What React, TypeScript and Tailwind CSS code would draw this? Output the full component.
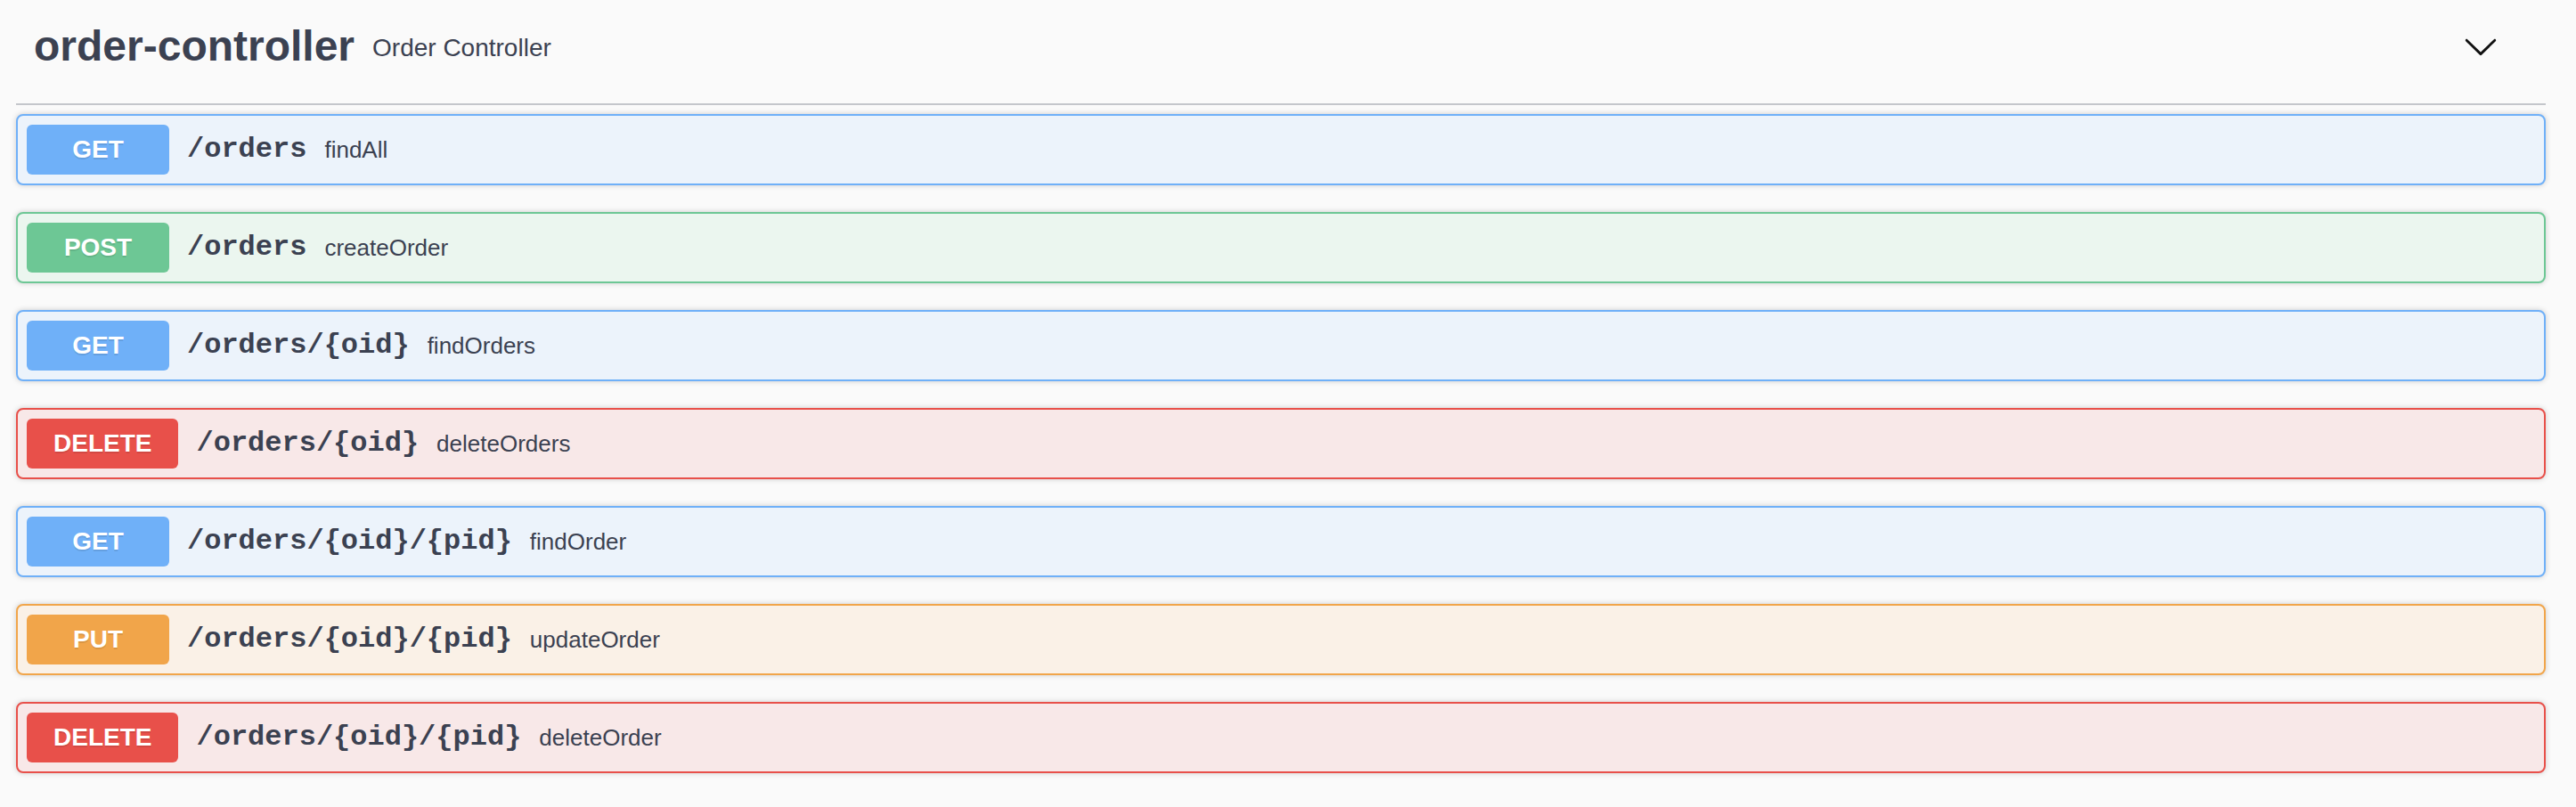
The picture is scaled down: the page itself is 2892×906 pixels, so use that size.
import React from "react";

type Op = {
  method: "GET" | "POST" | "PUT" | "DELETE";
  path: string;
  summary: string;
};

const ops: Op[] = [
  { method: "GET", path: "/orders", summary: "findAll" },
  { method: "POST", path: "/orders", summary: "createOrder" },
  { method: "GET", path: "/orders/{oid}", summary: "findOrders" },
  { method: "DELETE", path: "/orders/{oid}", summary: "deleteOrders" },
  { method: "GET", path: "/orders/{oid}/{pid}", summary: "findOrder" },
  { method: "PUT", path: "/orders/{oid}/{pid}", summary: "updateOrder" },
  { method: "DELETE", path: "/orders/{oid}/{pid}", summary: "deleteOrder" },
];

const styles = {
  GET: { row: "border-[#6fb0f8] bg-[#ecf3fb]", badge: "bg-[#6fb0f8] min-w-[160px]" },
  POST: { row: "border-[#6dc795] bg-[#ebf6ef]", badge: "bg-[#6dc795] min-w-[160px]" },
  PUT: { row: "border-[#f1a54a] bg-[#faf1e7]", badge: "bg-[#f1a54a] min-w-[160px]" },
  DELETE: { row: "border-[#e8504a] bg-[#f8e8e8]", badge: "bg-[#e8504a] min-w-[160px] px-[30px]" },
};

function Chevron() {
  return (
    <svg width="40" height="40" viewBox="0 0 20 20" className="fill-[#111]">
      <path d="M17.418 6.109c.272-.268.709-.268.979 0s.271.701 0 .969l-7.908 7.83c-.27.268-.707.268-.979 0l-7.908-7.83c-.27-.268-.27-.701 0-.969.271-.268.709-.268.979 0L10 13.25l7.418-7.141z" />
    </svg>
  );
}

function OpRow({ op }: { op: Op }) {
  const s = styles[op.method];
  return (
    <div
      className={`mb-[30px] flex items-center rounded-[8px] border-2 p-[10px] shadow-[0_0_6px_rgba(0,0,0,0.19)] ${s.row}`}
    >
      <span
        className={`flex h-[56px] items-center justify-center rounded-[6px] text-[28px] font-bold text-white [text-shadow:0_2px_0_rgba(0,0,0,0.1)] ${s.badge}`}
      >
        {op.method}
      </span>
      <span className="px-[20px] font-['Liberation_Mono',monospace] text-[32px] font-bold text-[#3b4151]">
        {op.path}
      </span>
      <span className="text-[26px] text-[#3b4151]">{op.summary}</span>
    </div>
  );
}

export default function App() {
  return (
    <div className="min-h-screen w-full bg-[#fafafa] font-['Liberation_Sans',Arial,sans-serif]">
      <div className="pl-[18px] pr-[34px]">
        <div className="mb-[10px] flex h-[118px] items-center border-b-2 border-[#c4c6cb] pb-[13px] pl-[20px] pr-[53px]">
          <h3 className="text-[48px] font-bold leading-none text-[#3b4151]">order-controller</h3>
          <span className="pl-[20px] pt-[4px] text-[28px] text-[#3b4151]">Order Controller</span>
          <div className="ml-auto flex items-center">
            <Chevron />
          </div>
        </div>
        {ops.map((op, i) => (
          <OpRow key={i} op={op} />
        ))}
      </div>
    </div>
  );
}
